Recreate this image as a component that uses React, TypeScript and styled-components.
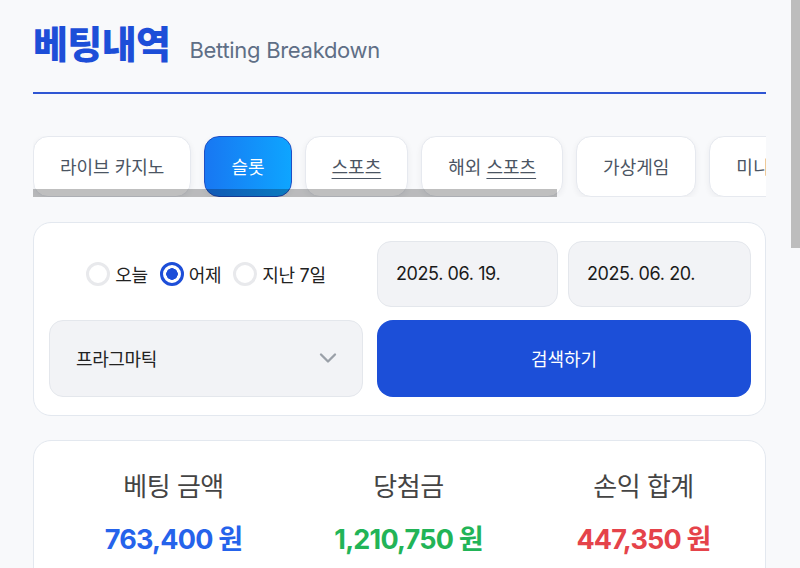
import React from "react";
import styled, { createGlobalStyle } from "styled-components";
import { ChevronDown } from "lucide-react";

const GlobalStyle = createGlobalStyle`
  html, body {
    margin: 0;
    padding: 0;
    background: #f8f9fb;
  }
  body {
    font-family: Inter, "Noto Sans CJK KR", "Noto Sans", sans-serif;
    color: #222;
  }
  * { box-sizing: border-box; }
`;

const Shell = styled.div`
  display: flex;
  height: 100vh;
  overflow: hidden;
`;

const Page = styled.main`
  flex: 1;
  min-width: 0;
  padding: 22px 25px 40px 33px;
`;

const ScrollRail = styled.div`
  width: 9px;
  flex-shrink: 0;
  background: #f8f9fb;
`;

const ScrollThumb = styled.div`
  height: 248px;
  background: #bdbdbd;
`;

const Header = styled.header`
  display: flex;
  align-items: baseline;
  gap: 19px;
  padding-bottom: 24px;
  border-bottom: 2px solid #2f56d3;
`;

const Title = styled.h1`
  margin: 0;
  font-size: 38px;
  font-weight: 800;
  color: #1d4ed8;
  letter-spacing: -0.6px;
  line-height: 1.2;
`;

const Subtitle = styled.span`
  font-size: 22px;
  font-weight: 400;
  color: #5f6f86;
  letter-spacing: -0.3px;
`;

const TabStrip = styled.nav`
  position: relative;
  margin-top: 42px;
  overflow: hidden;
`;

const TabRow = styled.div`
  display: flex;
  gap: 13px;
  width: max-content;
`;

const Tab = styled.button<{ $active?: boolean }>`
  height: 61px;
  padding: 0 26px;
  border-radius: 15px;
  font-family: inherit;
  font-size: 18px;
  white-space: nowrap;
  cursor: pointer;
  border: 1px solid ${(p) => (p.$active ? "#1f4fc4" : "#e6e9ef")};
  background: ${(p) =>
    p.$active ? "linear-gradient(90deg, #1877f2 0%, #0ea5ff 100%)" : "#fff"};
  color: ${(p) => (p.$active ? "#fff" : "#4b5563")};
  box-shadow: 0 2px 6px rgba(30, 41, 59, 0.06);
`;

const Underlined = styled.span`
  text-decoration: underline;
  text-underline-offset: 4px;
  text-decoration-thickness: 1px;
`;

/* overlay thumb of the horizontal tab scroller */
const StripThumb = styled.div`
  position: absolute;
  left: 0;
  bottom: 0;
  width: 524px;
  height: 8px;
  background: rgba(0, 0, 0, 0.25);
`;

const Card = styled.section`
  background: #fff;
  border: 1px solid #e3e8ef;
  border-radius: 18px;
`;

const FilterCard = styled(Card)`
  margin-top: 25px;
  padding: 18px 14px 18px 15px;
  display: grid;
  grid-template-columns: 314px 1fr;
  grid-template-rows: 66px 77px;
  gap: 13px 14px;
`;

const RadioGroup = styled.div`
  display: flex;
  align-items: center;
  justify-content: center;
  gap: 12px;
`;

const RadioLabel = styled.label`
  display: flex;
  align-items: center;
  gap: 5px;
  font-size: 18px;
  color: #222;
  letter-spacing: -0.3px;
`;

const RadioDot = styled.span<{ $checked?: boolean }>`
  width: 24px;
  height: 24px;
  border-radius: 50%;
  border: 3px solid ${(p) => (p.$checked ? "#1d4ed8" : "#e8e9ec")};
  background: ${(p) =>
    p.$checked
      ? "radial-gradient(circle, #1d4ed8 0 5.5px, #fff 6px)"
      : "#fff"};
`;

const DatePair = styled.div`
  display: grid;
  grid-template-columns: 181px 1fr;
  gap: 10px;
`;

const Field = styled.div`
  display: flex;
  align-items: center;
  justify-content: space-between;
  background: #f2f3f6;
  border: 1px solid #e4e7ec;
  border-radius: 14px;
  font-size: 18px;
  color: #1a1a1a;
  letter-spacing: -0.4px;
`;

const DateField = styled(Field)`
  padding: 0 18px;
`;

const SelectField = styled(Field)`
  padding: 0 20px 0 26px;
  color: #222;
  svg {
    color: #9aa0a8;
  }
`;

const SearchButton = styled.button`
  border: none;
  border-radius: 16px;
  background: #1c4fd8;
  color: #fff;
  font-family: inherit;
  font-size: 18px;
  cursor: pointer;
`;

const SummaryCard = styled(Card)`
  margin-top: 24px;
  padding: 25px 4px 60px 22px;
  display: grid;
  grid-template-columns: repeat(3, 1fr);
`;

const Stat = styled.div`
  display: flex;
  flex-direction: column;
  align-items: center;
  gap: 15px;
`;

const StatLabel = styled.div`
  font-size: 26px;
  color: #444;
  letter-spacing: -0.5px;
`;

const StatValue = styled.div<{ $color: string }>`
  font-size: 27px;
  font-weight: 700;
  color: ${(p) => p.$color};
  letter-spacing: -0.8px;
`;

const tabs = [
  { label: "라이브 카지노" },
  { label: "슬롯", active: true },
  { label: "스포츠", underline: "스포츠" },
  { label: "해외 스포츠", prefix: "해외 ", underline: "스포츠" },
  { label: "가상게임" },
  { label: "미니게임" },
  { label: "홀덤" },
];

const periods = [
  { label: "오늘" },
  { label: "어제", checked: true },
  { label: "지난 7일" },
];

const stats = [
  { label: "베팅 금액", value: "763,400 원", color: "#2563eb" },
  { label: "당첨금", value: "1,210,750 원", color: "#22b457" },
  { label: "손익 합계", value: "447,350 원", color: "#e5434a" },
];

export default function App() {
  return (
    <>
      <GlobalStyle />
      <Shell>
        <Page>
          <Header>
            <Title>베팅내역</Title>
            <Subtitle>Betting Breakdown</Subtitle>
          </Header>

          <TabStrip>
            <TabRow>
              {tabs.map((t) => (
                <Tab key={t.label} $active={t.active}>
                  {t.underline ? (
                    <>
                      {t.prefix}
                      <Underlined>{t.underline}</Underlined>
                    </>
                  ) : (
                    t.label
                  )}
                </Tab>
              ))}
            </TabRow>
            <StripThumb />
          </TabStrip>

          <FilterCard>
            <RadioGroup>
              {periods.map((p) => (
                <RadioLabel key={p.label}>
                  <RadioDot $checked={p.checked} />
                  {p.label}
                </RadioLabel>
              ))}
            </RadioGroup>
            <DatePair>
              <DateField>2025. 06. 19.</DateField>
              <DateField>2025. 06. 20.</DateField>
            </DatePair>
            <SelectField>
              프라그마틱
              <ChevronDown size={28} strokeWidth={2} />
            </SelectField>
            <SearchButton>검색하기</SearchButton>
          </FilterCard>

          <SummaryCard>
            {stats.map((s) => (
              <Stat key={s.label}>
                <StatLabel>{s.label}</StatLabel>
                <StatValue $color={s.color}>{s.value}</StatValue>
              </Stat>
            ))}
          </SummaryCard>
        </Page>
        <ScrollRail>
          <ScrollThumb />
        </ScrollRail>
      </Shell>
    </>
  );
}
